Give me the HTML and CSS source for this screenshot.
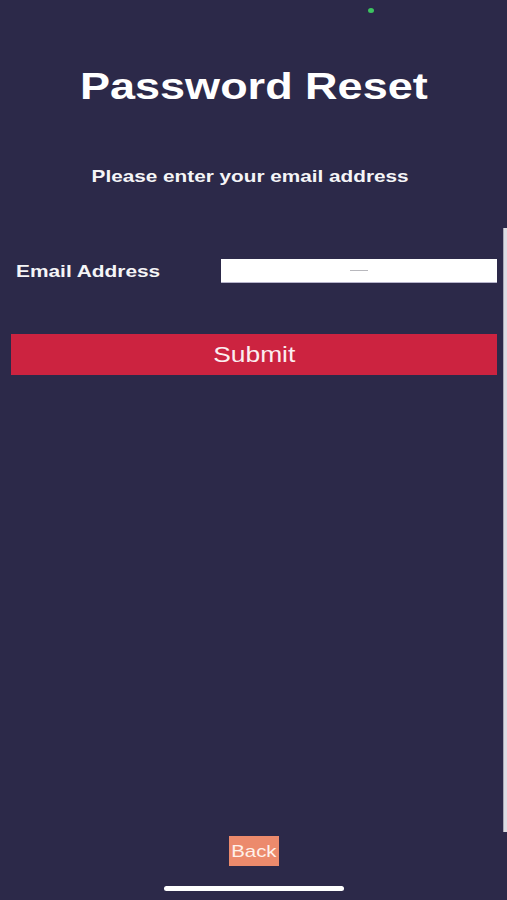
FILE: index.html
```html
<!DOCTYPE html>
<html lang="en">
<head>
<meta charset="utf-8">
<title>Password Reset</title>
<link rel="stylesheet" href="styles.css">
</head>
<body>
<div class="screen">
  <span class="camera-dot"></span>
  <span class="scroll-indicator"></span>
  <h1 class="title"><span class="wide">Password Reset</span></h1>
  <p class="subtitle"><span class="wide">Please enter your email address</span></p>
  <div class="field-row">
    <label class="field-label"><span class="wide wide-left">Email Address</span></label>
    <div class="field-input"><span class="placeholder-dash"></span></div>
  </div>
  <button class="submit-btn"><span class="wide">Submit</span></button>
  <div class="spacer"></div>
  <button class="back-btn"><span class="wide">Back</span></button>
  <div class="home-indicator"></div>
</div>
</body>
</html>
```

FILE: styles.css
```css
html, body {
  margin: 0;
  padding: 0;
  background: #2c2949;
}

.screen {
  position: relative;
  width: 507px;
  height: 900px;
  display: flex;
  flex-direction: column;
  align-items: stretch;
  background: #2c2949;
  font-family: "Liberation Sans", Arial, sans-serif;
  color: #ffffff;
  overflow: hidden;
}

.wide {
  display: inline-block;
  transform: scaleX(1.2);
  transform-origin: center;
}

.wide-left {
  transform-origin: left center;
}

.camera-dot {
  position: absolute;
  left: 368px;
  top: 8px;
  width: 6px;
  height: 5px;
  border-radius: 50%;
  background: #3cc460;
}

.scroll-indicator {
  position: absolute;
  left: 503px;
  top: 228px;
  width: 4px;
  height: 604px;
  background: #dcdce2;
  border-left: 1px solid #a9a8b6;
  box-sizing: border-box;
}

.title {
  margin: 65px 0 0;
  font-size: 37.5px;
  line-height: 43px;
  font-weight: bold;
  text-align: center;
  color: #ffffff;
}

.subtitle {
  margin: 58px 0 0;
  padding-right: 6px;
  font-size: 17.3px;
  line-height: 20px;
  font-weight: bold;
  text-align: center;
  color: #f5f5f7;
}

.field-row {
  margin-top: 73px;
  height: 24px;
  display: flex;
  align-items: center;
  padding: 0 10px 0 16px;
}

.field-label {
  flex: 0 0 205px;
  font-size: 17.4px;
  line-height: 24px;
  font-weight: bold;
  color: #f5f5f7;
}

.field-input {
  flex: 1;
  height: 24px;
  box-sizing: border-box;
  background: #ffffff;
  border-bottom: 1px solid #b7b4cc;
  display: flex;
  align-items: center;
  justify-content: center;
}

.placeholder-dash {
  width: 18px;
  height: 1px;
  background: #b8b8bd;
}

.submit-btn {
  margin: 51px 10px 0 11px;
  height: 41px;
  padding: 1px 0 0;
  border: none;
  background: #cc2340;
  color: #fbeef0;
  font-family: "Liberation Sans", Arial, sans-serif;
  font-size: 22px;
  display: flex;
  align-items: center;
  justify-content: center;
}

.spacer {
  flex: 1;
}

.back-btn {
  align-self: center;
  margin-left: 1px;
  width: 50px;
  height: 30px;
  padding: 1px 0 0;
  border: none;
  background: #ec8a6c;
  color: #fff1ea;
  font-family: "Liberation Sans", Arial, sans-serif;
  font-size: 17px;
  display: flex;
  align-items: center;
  justify-content: center;
}

.home-indicator {
  align-self: center;
  margin: 20px 0 9px 1px;
  width: 180px;
  height: 5px;
  border-radius: 3px;
  background: #ffffff;
}
```
